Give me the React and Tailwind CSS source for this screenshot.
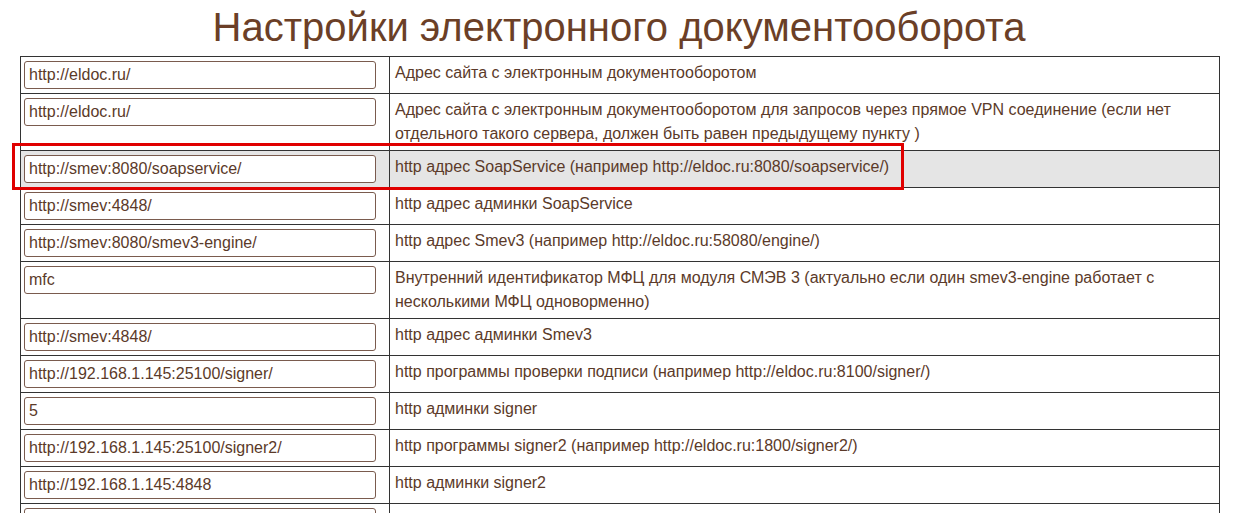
import React from 'react';

const rows = [
  { value: 'http://eldoc.ru/', label: 'Адрес сайта с электронным документооборотом' },
  {
    value: 'http://eldoc.ru/',
    label:
      'Адрес сайта с электронным документооборотом для запросов через прямое VPN соединение (если нет отдельного такого сервера, должен быть равен предыдущему пункту )',
  },
  { value: 'http://smev:8080/soapservice/', label: 'http адрес SoapService (например http://eldoc.ru:8080/soapservice/)', active: true },
  { value: 'http://smev:4848/', label: 'http адрес админки SoapService' },
  { value: 'http://smev:8080/smev3-engine/', label: 'http адрес Smev3 (например http://eldoc.ru:58080/engine/)' },
  {
    value: 'mfc',
    label:
      'Внутренний идентификатор МФЦ для модуля СМЭВ 3 (актуально если один smev3-engine работает с несколькими МФЦ одноворменно)',
  },
  { value: 'http://smev:4848/', label: 'http адрес админки Smev3' },
  { value: 'http://192.168.1.145:25100/signer/', label: 'http программы проверки подписи (например http://eldoc.ru:8100/signer/)' },
  { value: '5', label: 'http админки signer' },
  { value: 'http://192.168.1.145:25100/signer2/', label: 'http программы signer2 (например http://eldoc.ru:1800/signer2/)' },
  { value: 'http://192.168.1.145:4848', label: 'http админки signer2' },
  { value: '', label: '' },
];

export default function App() {
  return (
    <div className="min-h-screen bg-white text-[#5b3a29] font-['Liberation_Sans',Arial,sans-serif]">
      <h1 className="pt-[3px] mb-[5px] text-center text-[40px] leading-[48px] font-normal text-[#6b3f27]">
        Настройки электронного документооборота
      </h1>

      <div className="relative w-[1200px] ml-[20px]">
        <table className="w-full border-collapse text-[16px] leading-[24px]">
          <tbody>
            {rows.map((row, i) => (
              <tr key={i} className={row.active ? 'bg-[#e5e5e5]' : ''}>
                <td className="w-[369px] border border-[#333] py-[4px] pl-[3px] pr-[4px] align-top">
                  <input
                    type="text"
                    readOnly
                    value={row.value}
                    className="block w-[352px] h-[28px] px-[4px] bg-white border border-[#7a5b4e] rounded-[3px] text-[16px] text-[#5b3a29] outline-none font-['Liberation_Sans',Arial,sans-serif]"
                  />
                </td>
                <td className="border border-[#333] py-[4px] px-[5px] align-top">{row.label}</td>
              </tr>
            ))}
          </tbody>
        </table>

        {/* red highlight around the SoapService row */}
        <div className="absolute left-[-8px] top-[87px] w-[892px] h-[47px] border-[3px] border-[#e00000] pointer-events-none" />
      </div>
    </div>
  );
}
